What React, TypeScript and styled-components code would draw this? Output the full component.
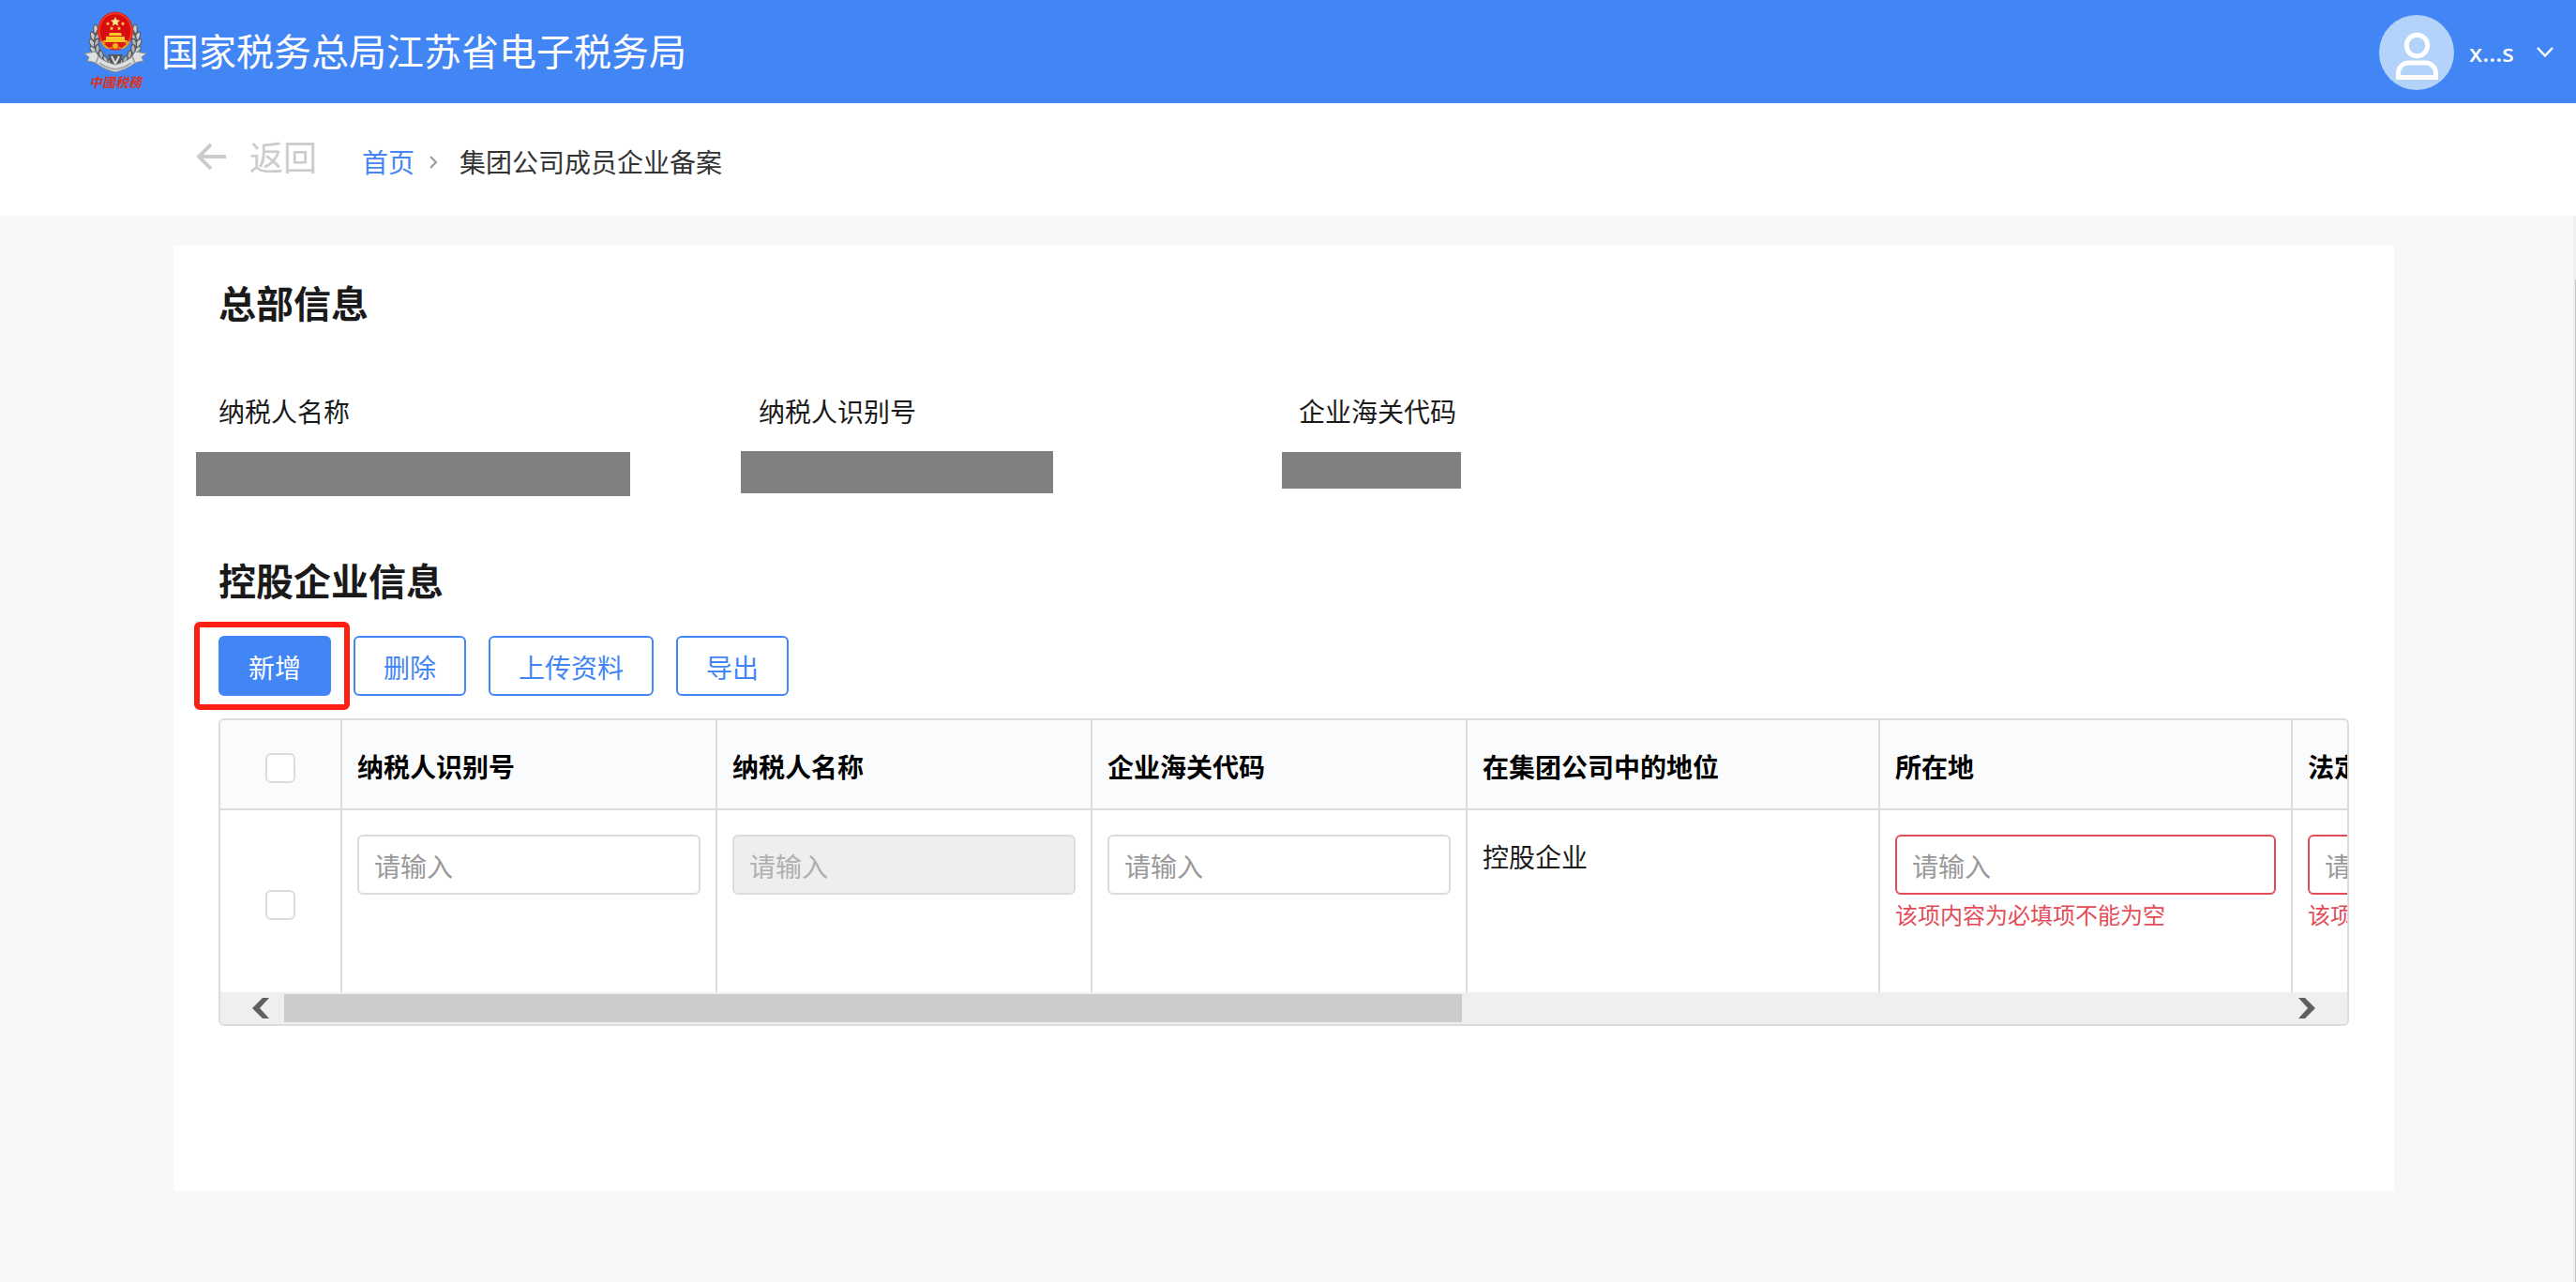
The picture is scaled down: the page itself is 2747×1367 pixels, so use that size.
import React, { useEffect, useRef, useState } from "react";
import styled, { createGlobalStyle, css } from "styled-components";

const BLUE = "#4285f5";
const LINE = "#dcdcdc";
const ERROR = "#e34d59";

const GlobalStyle = createGlobalStyle`
  * { box-sizing: border-box; }
  body { margin: 0; }
  body, button, input {
    font-family: "Noto Sans", "Noto Sans CJK SC", sans-serif;
  }
`;

const Page = styled.div`
  display: flex;
  flex-direction: column;
  min-height: 100vh;
  background: #f7f8fa;
  color: #1a1a1a;
  font-size: 28px;
  line-height: 40px;
`;

const Header = styled.header`
  display: flex;
  align-items: center;
  justify-content: space-between;
  height: 110px;
  padding: 0 24px 0 88px;
  background: ${BLUE};
  color: #fff;
`;

const Brand = styled.div`
  display: flex;
  align-items: center;
  gap: 14px;
`;

const Emblem = styled.div`
  display: flex;
  flex-direction: column;
  align-items: center;
  width: 70px;
`;

const EmblemText = styled.span`
  color: #d8341f;
  font-size: 14px;
  font-weight: 700;
  font-style: italic;
  line-height: 20px;
`;

const SiteName = styled.h1`
  margin: 0;
  font-size: 40px;
  font-weight: 400;
  line-height: 60px;
`;

const UserMenu = styled.button`
  display: flex;
  align-items: center;
  padding: 2px 0 0;
  border: 0;
  background: none;
  color: #fff;
  font-size: 26px;
  font-weight: 500;
  line-height: 40px;
  cursor: pointer;
`;

const UserName = styled.span`
  margin: 0 24px 0 16px;
`;

const Crumbs = styled.nav`
  display: flex;
  align-items: center;
  height: 120px;
  padding-left: 208px;
  background: #fff;
`;

const BackButton = styled.button`
  display: flex;
  align-items: center;
  gap: 24px;
  margin-right: 48px;
  padding: 0 0 2px;
  border: 0;
  background: none;
  color: #ccc;
  font-size: 36px;
  line-height: 56px;
  cursor: pointer;
`;

const BackArrow = styled.svg`
  margin-bottom: 4px;
`;

const CrumbTrail = styled.div`
  display: flex;
  align-items: center;
  padding-top: 6px;
  color: #333;
`;

const HomeLink = styled.a`
  color: ${BLUE};
  text-decoration: none;
`;

const CrumbArrow = styled.svg`
  margin: 0 22px 0 14px;
`;

const Body = styled.div`
  display: flex;
  flex: 1;
`;

const Main = styled.main`
  display: flex;
  flex: 1;
  min-width: 0;
  padding: 32px 191px 97px 185px;
`;

const PageRail = styled.div`
  width: 3px;
  padding: 68px 0 0 2px;
  background: #efefef;
`;

const PageThumb = styled.div`
  height: 100%;
  background: #c4c4c4;
`;

const Card = styled.div`
  flex: 1;
  min-width: 0;
  padding: 32px 48px;
  background: #fff;
`;

const SectionTitle = styled.h2`
  margin: 0;
  font-size: 40px;
  font-weight: 700;
  line-height: 60px;
`;

const InfoGrid = styled.dl`
  display: grid;
  grid-template-columns: repeat(4, 1fr);
  margin: 64px -32px 60px 0;
`;

const InfoTerm = styled.dt`
  line-height: 42px;
`;

const InfoValue = styled.dd`
  position: relative;
  height: 48px;
  margin: 22px 0 0;
`;

const Mask = styled.span<{ $left: number; $top: number; $width: number; $height: number }>`
  position: absolute;
  left: ${(p) => p.$left}px;
  top: ${(p) => p.$top}px;
  width: ${(p) => p.$width}px;
  height: ${(p) => p.$height}px;
  background: #808080;
`;

const Toolbar = styled.div`
  display: flex;
  gap: 24px;
  margin: 28px 0 24px;
`;

const ButtonSlot = styled.div`
  position: relative;
`;

const Highlight = styled.span`
  position: absolute;
  inset: -15px -20px -15px -26px;
  border: 6px solid #ff2012;
  border-radius: 6px;
  pointer-events: none;
`;

const ToolButton = styled.button<{ $primary?: boolean }>`
  display: block;
  height: 64px;
  padding: 4px 30px 0;
  border: 2px solid ${BLUE};
  border-radius: 6px;
  background: ${(p) => (p.$primary ? BLUE : "#fff")};
  color: ${(p) => (p.$primary ? "#fff" : BLUE)};
  font-size: 28px;
  line-height: 40px;
  cursor: pointer;
`;

const TableFrame = styled.div`
  overflow: hidden;
  border: 2px solid ${LINE};
  border-radius: 6px;
`;

const Scroller = styled.div`
  overflow-x: auto;
  scrollbar-width: none;
`;

const Table = styled.table`
  width: 3850px;
  table-layout: fixed;
  border-collapse: separate;
  border-spacing: 0;
`;

const HeadCell = styled.th`
  height: 96px;
  padding: 6px 16px 0;
  border-right: 2px solid ${LINE};
  border-bottom: 2px solid ${LINE};
  background: #fafbfd;
  color: #000;
  font-weight: 700;
  text-align: left;
`;

const Cell = styled.td`
  height: 194px;
  padding: 26px 16px 0;
  border-right: 2px solid ${LINE};
  vertical-align: top;
`;

const HeadCheckCell = styled(HeadCell)`
  padding: 8px 0 0;
  text-align: center;
`;

const CheckCell = styled(Cell)`
  padding: 8px 0 0;
  text-align: center;
  vertical-align: middle;
`;

const Checkbox = styled.input`
  display: block;
  appearance: none;
  width: 32px;
  height: 32px;
  margin: 0 auto;
  border: 2px solid ${LINE};
  border-radius: 6px;
  background: #fff;
  &:checked { background: ${BLUE}; }
`;

const TextBox = styled.input<{ $error?: boolean }>`
  display: block;
  width: 100%;
  height: 64px;
  padding: 4px 16px 0;
  border: 2px solid ${(p) => (p.$error ? ERROR : LINE)};
  border-radius: 6px;
  background: #fff;
  font-size: 28px;
  &::placeholder { color: #999; opacity: 1; }
  ${(p) =>
    p.disabled &&
    css`
      background: #eee;
      &::placeholder { color: #b0b0b0; }
    `}
`;

const ErrorText = styled.p`
  margin: 4px 0 0;
  color: ${ERROR};
  font-size: 24px;
  line-height: 36px;
  white-space: nowrap;
`;

const CellText = styled.div`
  padding-top: 4px;
`;

const ScrollBar = styled.div`
  display: grid;
  grid-template-columns: 68px 1fr 68px;
  height: 34px;
  padding: 2px 0;
  background: #efefef;
`;

const ScrollButton = styled.button<{ $end?: boolean }>`
  display: flex;
  align-items: center;
  justify-content: ${(p) => (p.$end ? "flex-start" : "flex-end")};
  padding: 0 16px;
  border: 0;
  background: none;
  cursor: pointer;
`;

const Track = styled.div`
  overflow: hidden;
`;

const Thumb = styled.div`
  height: 30px;
  background: #ccc;
`;

const wreath = [
  [16, 19, 20],
  [13, 26, 5],
  [12, 33, -8],
  [13, 40, -20],
  [17, 47, -36],
  [22, 53, -48],
  [28, 57, -60],
];

const smallStars = [
  [27, 13],
  [43, 13],
  [31, 18],
  [39, 18],
];

function EmblemArt() {
  return (
    <svg width="70" height="66" viewBox="0 0 70 66" aria-hidden="true">
      {[1, -1].map((side) => (
        <g key={side} transform={side === 1 ? undefined : "translate(70 0) scale(-1 1)"}>
          {wreath.map(([x, y, r]) => (
            <g key={y} transform={`translate(${x} ${y}) rotate(${r})`}>
              <ellipse cx="-2" rx="2.4" ry="4.6" fill="#c9cacb" stroke="#585c60" strokeWidth="1.2" transform="rotate(-22)" />
              <ellipse cx="3" rx="2.2" ry="4.4" fill="#b2b5b7" stroke="#50545a" strokeWidth="1.2" transform="rotate(22)" />
            </g>
          ))}
        </g>
      ))}
      <path d="M27 46h16l-3 11-5 6-5-6z" fill="#54585a" />
      <path d="M31 48l4 8 4-8" fill="none" stroke="#dcdcdc" strokeWidth="2" />
      <path
        d="M2 45l12-2 3 5c5 5 11 7 18 9 7-2 13-4 18-9l3-5 12 2-5 4 2 4c-7 1-10 2-13 5-5 3-10 5-17 7-7-2-12-4-17-7-3-3-6-4-13-5l2-4z"
        fill="#dfe0e0"
        stroke="#888c8e"
        strokeWidth="1"
      />
      <path d="M17 48l-3 8M53 48l3 8M18 55c5 4 11 6 17 7 6-1 12-3 17-7" fill="none" stroke="#a3a6a6" strokeWidth="2" />
      <ellipse cx="35" cy="21" rx="19" ry="20.5" fill="#e8211a" />
      <ellipse cx="35" cy="21" rx="17" ry="18.5" fill="#d90d10" stroke="#f0571d" strokeWidth="1" />
      <path d="M19 31c4 3 8 4 16 4s12-1 16-4c-2 5-5 8-8 9l-8-1-8 1c-3-1-6-4-8-9z" fill="#f4a41d" />
      <path d="M23 35l5-2 7 3 7-3 5 2-5 4-7-2-7 2z" fill="#d51d12" />
      <circle cx="35" cy="37" r="3.5" fill="#f6b223" stroke="#d4280f" strokeWidth="1" />
      <path d="M29 23h12l1 3H28zM25 27h20v4H25zM22 31h26l-1 2H23z" fill="#f9c62b" />
      <path d="M35 6l1.500 3.300 3.600.400-2.700 2.400.800 3.600-3.200-1.900-3.200 1.900.800-3.600-2.700-2.400 3.600-.400z" fill="#ffe58a" />
      {smallStars.map(([x, y]) => (
        <path key={`${x}-${y}`} d={`M${x} ${y - 2}l.7 1.400 1.500.2-1.100 1 .3 1.500-1.400-.7-1.400.7.3-1.500-1.100-1 1.500-.2z`} fill="#ffd24a" />
      ))}
    </svg>
  );
}

function Avatar() {
  return (
    <svg width="80" height="80" viewBox="0 0 80 80" aria-hidden="true">
      <circle cx="40" cy="40" r="40" fill="#b3d3fb" />
      <circle cx="40.5" cy="32.5" r="11.2" fill="none" stroke="#fff" strokeWidth="5" />
      <path d="M20.500 66.500V62a11 11 0 0 1 11-11h18a11 11 0 0 1 11 11v4.500z" fill="none" stroke="#fff" strokeWidth="5" />
    </svg>
  );
}

type Kind = "input" | "disabled" | "text" | "required" | "empty";

const columns: { title: string; width: number; kind: Kind }[] = [
  { title: "纳税人识别号", width: 400, kind: "input" },
  { title: "纳税人名称", width: 400, kind: "disabled" },
  { title: "企业海关代码", width: 400, kind: "input" },
  { title: "在集团公司中的地位", width: 440, kind: "text" },
  { title: "所在地", width: 440, kind: "required" },
  { title: "法定代表人", width: 440, kind: "required" },
  { title: "", width: 400, kind: "empty" },
  { title: "", width: 400, kind: "empty" },
  { title: "", width: 400, kind: "empty" },
];

const infoItems = [
  { label: "纳税人名称", mask: [-24, 0, 463, 47] },
  { label: "纳税人识别号", mask: [-19, -1, 333, 45] },
  { label: "企业海关代码", mask: [-18, 0, 191, 39] },
];

function Field({ title, kind }: { title: string; kind: Kind }) {
  if (kind === "empty") return null;
  if (kind === "text") return <CellText>控股企业</CellText>;
  return (
    <>
      <TextBox aria-label={title} placeholder="请输入" disabled={kind === "disabled"} $error={kind === "required"} />
      {kind === "required" && <ErrorText>该项内容为必填项不能为空</ErrorText>}
    </>
  );
}

function MemberTable() {
  const scroller = useRef<HTMLDivElement>(null);
  const [bar, setBar] = useState({ size: 59, start: 0 });

  const measure = () => {
    const el = scroller.current;
    if (!el) return;
    setBar({
      size: (el.clientWidth / el.scrollWidth) * 100,
      start: (el.scrollLeft / el.scrollWidth) * 100,
    });
  };

  useEffect(() => {
    measure();
    window.addEventListener("resize", measure);
    return () => window.removeEventListener("resize", measure);
  }, []);

  const move = (by: number) => scroller.current?.scrollBy({ left: by, behavior: "smooth" });

  return (
    <TableFrame>
      <Scroller ref={scroller} onScroll={measure}>
        <Table>
          <colgroup>
            <col width="130" />
            {columns.map((c, i) => (
              <col key={i} width={c.width} />
            ))}
          </colgroup>
          <thead>
            <tr>
              <HeadCheckCell>
                <Checkbox type="checkbox" aria-label="全选" />
              </HeadCheckCell>
              {columns.map((c, i) => (
                <HeadCell key={i}>{c.title}</HeadCell>
              ))}
            </tr>
          </thead>
          <tbody>
            <tr>
              <CheckCell>
                <Checkbox type="checkbox" aria-label="选择" />
              </CheckCell>
              {columns.map((c, i) => (
                <Cell key={i}>
                  <Field title={c.title} kind={c.kind} />
                </Cell>
              ))}
            </tr>
          </tbody>
        </Table>
      </Scroller>
      <ScrollBar>
        <ScrollButton type="button" aria-label="向左" onClick={() => move(-400)}>
          <svg width="18" height="22" viewBox="0 0 18 22">
            <path d="M11 0h7L8 11l10 11h-7L0 11z" fill="#606060" />
          </svg>
        </ScrollButton>
        <Track>
          <Thumb style={{ width: `${bar.size}%`, marginLeft: `${bar.start}%` }} />
        </Track>
        <ScrollButton type="button" $end aria-label="向右" onClick={() => move(400)}>
          <svg width="18" height="22" viewBox="0 0 18 22">
            <path d="M7 0H0l10 11L0 22h7l11-11z" fill="#606060" />
          </svg>
        </ScrollButton>
      </ScrollBar>
    </TableFrame>
  );
}

export default function App() {
  return (
    <Page>
      <GlobalStyle />
      <Header>
        <Brand>
          <Emblem>
            <EmblemArt />
            <EmblemText>中國税務</EmblemText>
          </Emblem>
          <SiteName>国家税务总局江苏省电子税务局</SiteName>
        </Brand>
        <UserMenu type="button">
          <Avatar />
          <UserName>x...s</UserName>
          <svg width="18" height="12" viewBox="0 0 18 12" fill="none" stroke="#fff" strokeWidth="2.5" aria-hidden="true">
            <path d="M1 1l8 8.500L17 1" />
          </svg>
        </UserMenu>
      </Header>
      <Crumbs>
        <BackButton type="button">
          <BackArrow width="34" height="28" viewBox="0 0 34 28" fill="none" stroke="#ccc" strokeWidth="4" aria-hidden="true">
            <path d="M17 1L4 14l13 13M4 14h29" />
          </BackArrow>
          返回
        </BackButton>
        <CrumbTrail>
          <HomeLink href="#">首页</HomeLink>
          <CrumbArrow width="12" height="14" viewBox="0 0 12 14" fill="none" stroke="#999" strokeWidth="2" aria-hidden="true">
            <path d="M3 1l6 6-6 6" />
          </CrumbArrow>
          <span>集团公司成员企业备案</span>
        </CrumbTrail>
      </Crumbs>
      <Body>
        <Main>
          <Card>
            <SectionTitle>总部信息</SectionTitle>
            <InfoGrid>
              {infoItems.map(({ label, mask: [left, top, width, height] }) => (
                <div key={label}>
                  <InfoTerm>{label}</InfoTerm>
                  <InfoValue>
                    <Mask $left={left} $top={top} $width={width} $height={height} />
                  </InfoValue>
                </div>
              ))}
            </InfoGrid>
            <SectionTitle>控股企业信息</SectionTitle>
            <Toolbar>
              <ButtonSlot>
                <ToolButton type="button" $primary>新增</ToolButton>
                <Highlight />
              </ButtonSlot>
              <ToolButton type="button">删除</ToolButton>
              <ToolButton type="button">上传资料</ToolButton>
              <ToolButton type="button">导出</ToolButton>
            </Toolbar>
            <MemberTable />
          </Card>
        </Main>
        <PageRail>
          <PageThumb />
        </PageRail>
      </Body>
    </Page>
  );
}
